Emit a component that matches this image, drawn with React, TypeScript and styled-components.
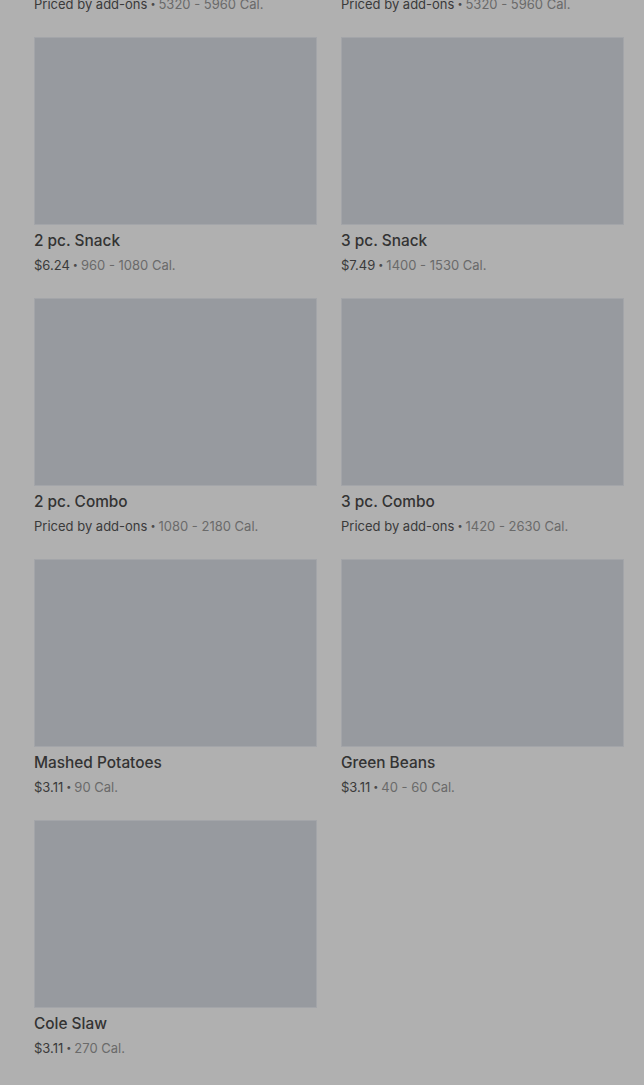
import styled, { createGlobalStyle } from 'styled-components';

interface MenuItem {
    name: string;
    price: string;
    cal: string;
}

const items: MenuItem[] = [
    { name: '8 pc. Family Meal', price: 'Priced by add-ons', cal: '5320 - 5960 Cal.' },
    { name: '12 pc. Family Meal', price: 'Priced by add-ons', cal: '5320 - 5960 Cal.' },
    { name: '2 pc. Snack', price: '$6.24', cal: '960 - 1080 Cal.' },
    { name: '3 pc. Snack', price: '$7.49', cal: '1400 - 1530 Cal.' },
    { name: '2 pc. Combo', price: 'Priced by add-ons', cal: '1080 - 2180 Cal.' },
    { name: '3 pc. Combo', price: 'Priced by add-ons', cal: '1420 - 2630 Cal.' },
    { name: 'Mashed Potatoes', price: '$3.11', cal: '90 Cal.' },
    { name: 'Green Beans', price: '$3.11', cal: '40 - 60 Cal.' },
    { name: 'Cole Slaw', price: '$3.11', cal: '270 Cal.' },
];

export default function App() {
    return (
        <>
            <GlobalStyle />
            <MenuGrid>
                {items.map((item) => (
                    <Card key={item.name}>
                        <Thumb />
                        <ItemName>{item.name}</ItemName>
                        <Meta>
                            <Price>{item.price}</Price>
                            <Dot>•</Dot>
                            <Cal>{item.cal}</Cal>
                        </Meta>
                    </Card>
                ))}
            </MenuGrid>
        </>
    );
}

const GlobalStyle = createGlobalStyle`
    html, body {
        margin: 0;
        background: #b0b0b0;
        overflow: hidden;
    }
    body {
        font-family: Inter, "Liberation Sans", sans-serif;
    }
`;

// page is scrolled down one row; the first row sits above the fold
const MenuGrid = styled.div`
    display: grid;
    grid-template-columns: 1fr 1fr;
    column-gap: 24px;
    row-gap: 23px;
    padding: 0 20px 40px 34px;
    margin-top: -224px;
`;

const Card = styled.div`
    display: flex;
    flex-direction: column;
`;

const Thumb = styled.div`
    height: 188px;
    box-sizing: border-box;
    background: #979a9f;
    border: 1px solid #a3a5a9;
`;

const ItemName = styled.div`
    margin-top: 6px;
    font-size: 15.4px;
    line-height: 20px;
    font-weight: 500;
    color: #333333;
`;

const Meta = styled.div`
    margin-top: 4px;
    display: flex;
    align-items: center;
    font-size: 13px;
    line-height: 20px;
    white-space: nowrap;
`;

const Price = styled.span`
    color: #3a3a3a;
`;

const Dot = styled.span`
    margin: 0 3px;
    font-size: 9px;
    color: #4a4a4a;
`;

const Cal = styled.span`
    color: #6a6a6a;
`;
